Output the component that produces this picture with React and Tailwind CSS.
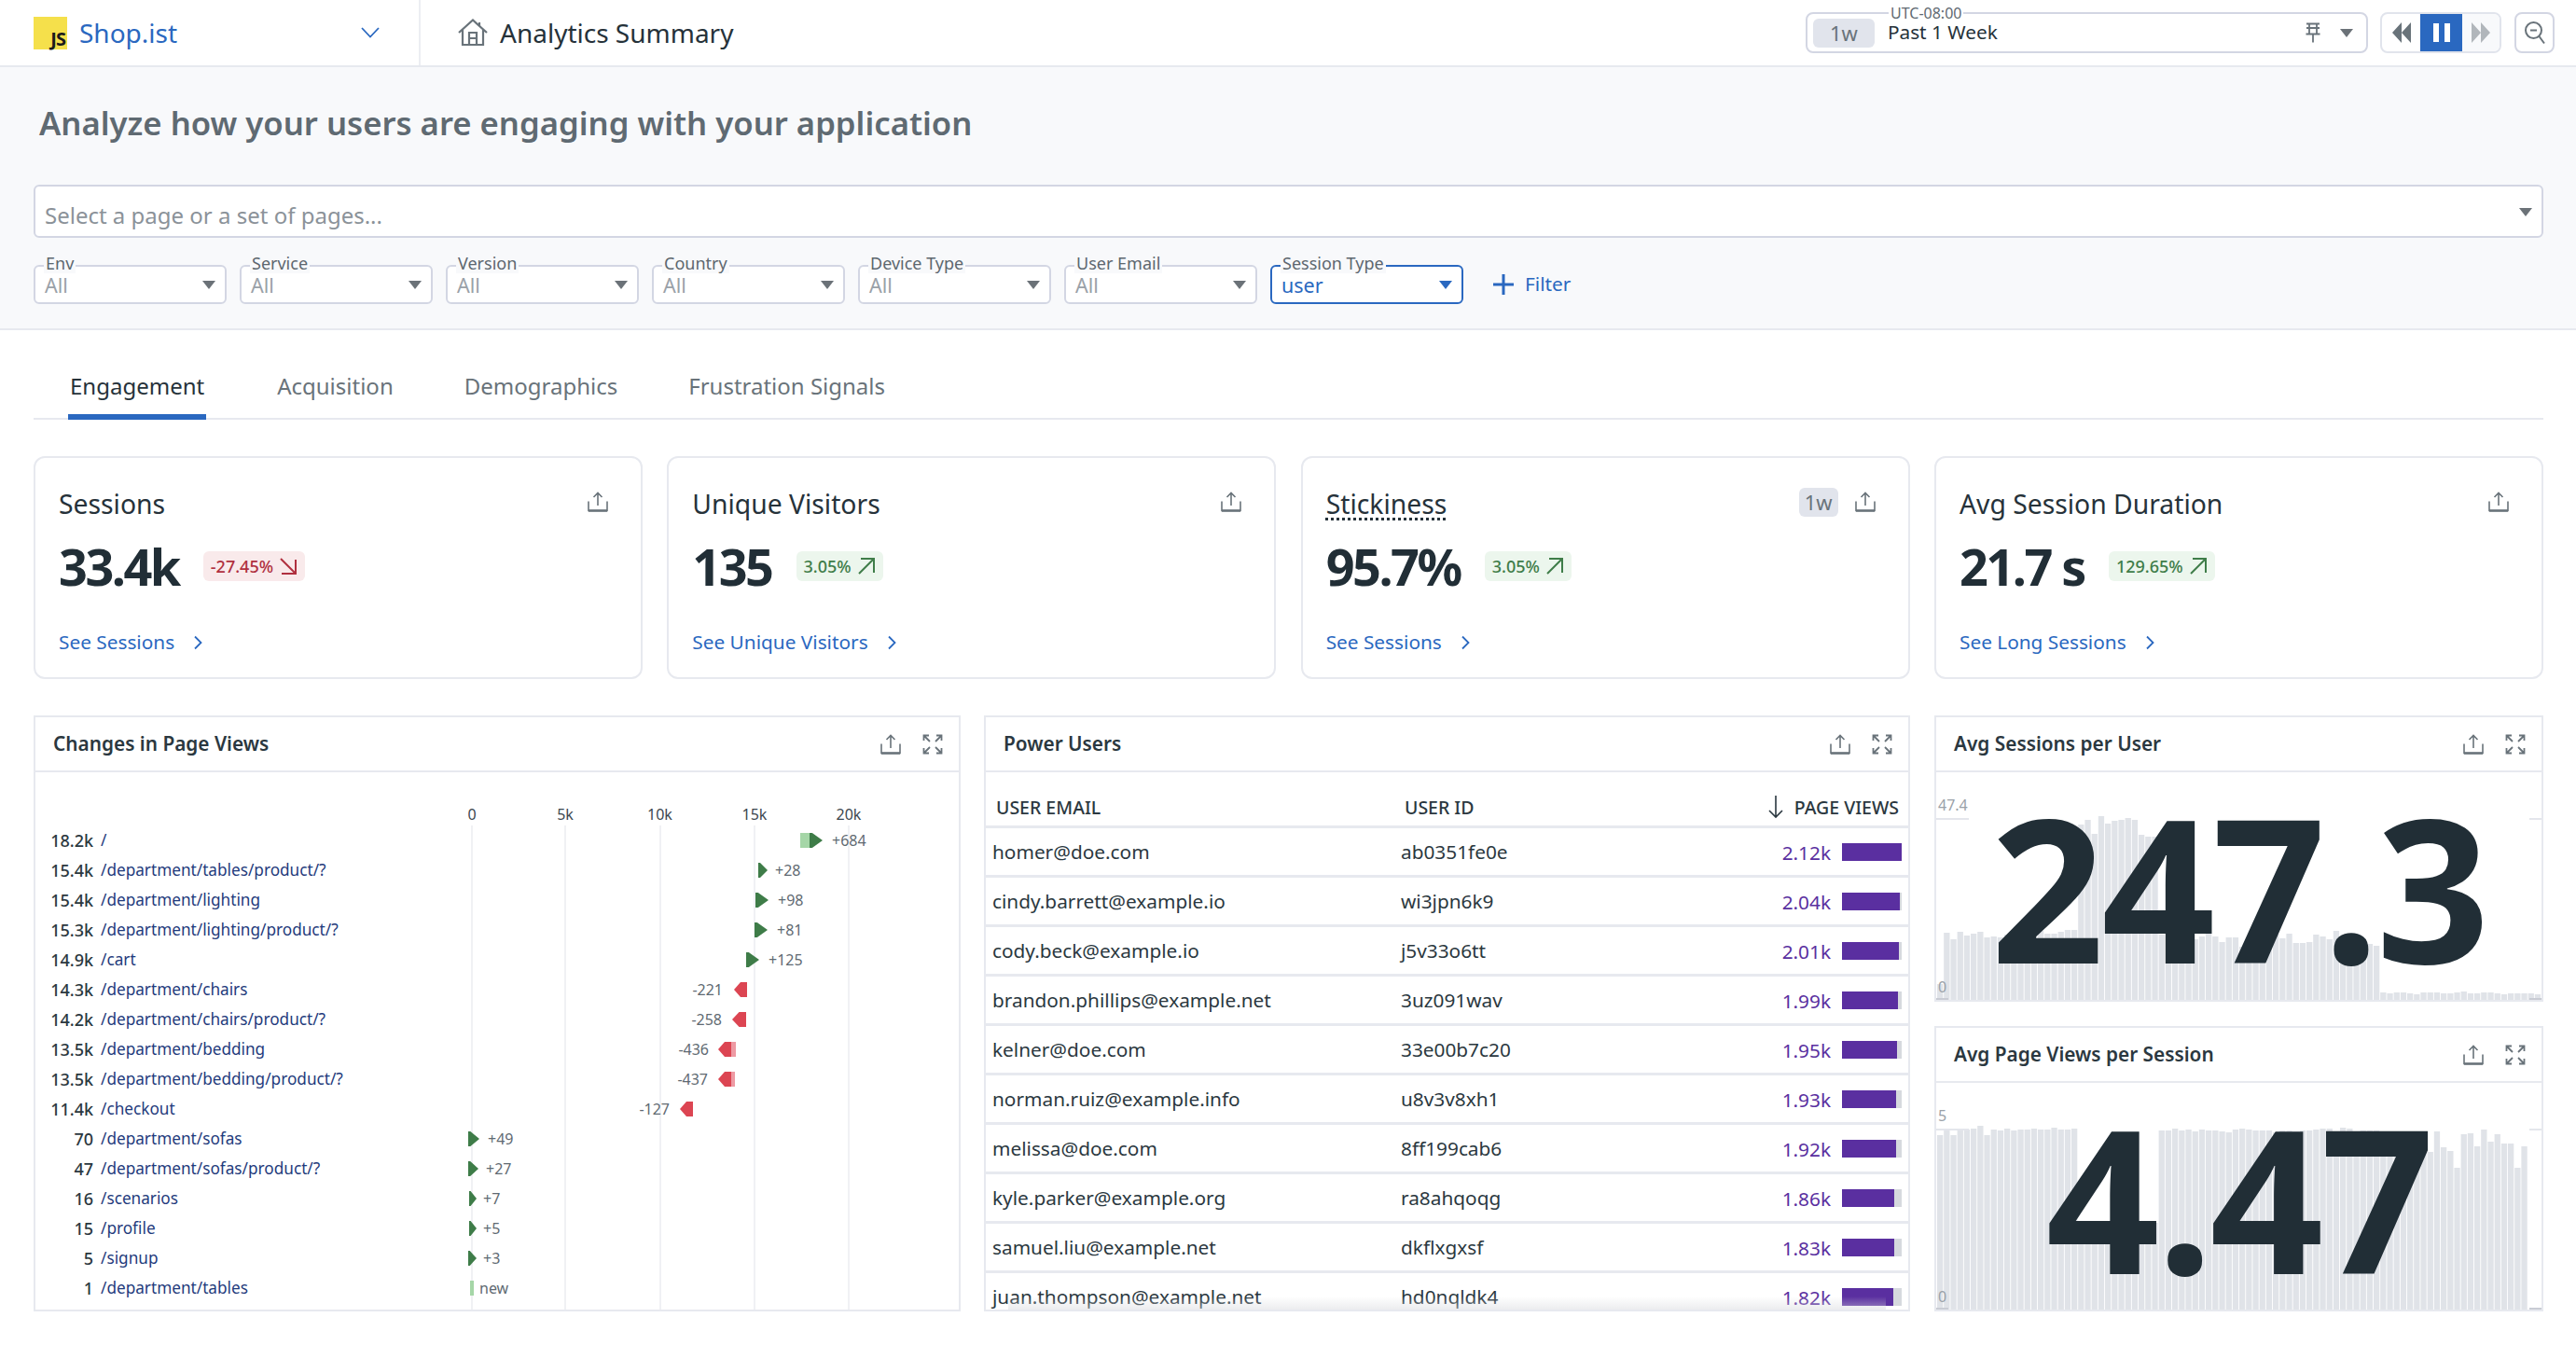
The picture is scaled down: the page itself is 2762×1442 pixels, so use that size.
const CARDS = [
  { title: "Sessions", value: "33.4k", delta: "-27.45%", down: true, link: "See Sessions" },
  { title: "Unique Visitors", value: "135", delta: "3.05%", link: "See Unique Visitors" },
  { title: "Stickiness", value: "95.7%", delta: "3.05%", link: "See Sessions", dotted: true, badge: "1w" },
  { title: "Avg Session Duration", value: "21.7 s", delta: "129.65%", link: "See Long Sessions" },
];

const FILTERS = ["Env", "Service", "Version", "Country", "Device Type", "User Email"];

// value, path, arrow start/end, light bar start/end, label, label position (all px from panel's left)
const PAGE_CHANGES = [
  ["18.2k", "/", 830, 844, 820, 830, "+684", 854],
  ["15.4k", "/department/tables/product/?", 775, 785, 0, 0, "+28", 793],
  ["15.4k", "/department/lighting", 772, 786, 0, 0, "+98", 796],
  ["15.3k", "/department/lighting/product/?", 771, 785, 0, 0, "+81", 795],
  ["14.9k", "/cart", 762, 776, 0, 0, "+125", 786],
  ["14.3k", "/department/chairs", 749, 763, 0, 0, "-221", 737],
  ["14.2k", "/department/chairs/product/?", 747, 762, 0, 0, "-258", 736],
  ["13.5k", "/department/bedding", 732, 746, 746, 751, "-436", 722],
  ["13.5k", "/department/bedding/product/?", 732, 746, 746, 750, "-437", 721],
  ["11.4k", "/checkout", 691, 705, 0, 0, "-127", 680],
  ["70", "/department/sofas", 464, 476, 0, 0, "+49", 485],
  ["47", "/department/sofas/product/?", 464, 475, 0, 0, "+27", 483],
  ["16", "/scenarios", 465, 473, 0, 0, "+7", 480],
  ["15", "/profile", 465, 473, 0, 0, "+5", 480],
  ["5", "/signup", 464, 473, 0, 0, "+3", 480],
  ["1", "/department/tables", 0, 0, 466, 469.5, "new", 476],
];

const AXIS = [["0", 468], ["5k", 568], ["10k", 669.5], ["15k", 771], ["20k", 872]];

const USERS = [
  ["homer@doe.com", "ab0351fe0e", "2.12k", 64],
  ["cindy.barrett@example.io", "wi3jpn6k9", "2.04k", 62],
  ["cody.beck@example.io", "j5v33o6tt", "2.01k", 61],
  ["brandon.phillips@example.net", "3uz091wav", "1.99k", 60],
  ["kelner@doe.com", "33e00b7c20", "1.95k", 59],
  ["norman.ruiz@example.info", "u8v3v8xh1", "1.93k", 58],
  ["melissa@doe.com", "8ff199cab6", "1.92k", 57.5],
  ["kyle.parker@example.org", "ra8ahqoqg", "1.86k", 56],
  ["samuel.liu@example.net", "dkflxgxsf", "1.83k", 55.5],
  ["juan.thompson@example.net", "hd0nqldk4", "1.82k", 55],
];

const SESSION_BARS = [
  17, 72, 65, 73, 69, 71, 73, 67, 68, 67, 70, 69, 68, 71, 72, 74, 71, 71, 73, 75, 75,
  188, 193, 178, 197, 189, 192, 193, 195, 193, 177, 175, 175,
  70, 68, 66, 69, 67, 65, 68, 71, 68, 62, 67, 67, 57, 62, 67, 66, 68, 70, 66, 71, 61, 61, 62, 70, 68, 65, 74, 67, 65, 65, 62, 60, 58,
  8, 7, 8, 8, 7, 6, 8, 8, 8, 7, 7, 8, 9, 7, 7, 8, 8, 7, 6, 7, 7, 7, 7, 6,
];

const PAGEVIEW_BARS = [
  187, 192, 187, 193, 193, 194, 197, 187, 193, 192, 194, 192, 193, 193, 194, 193, 193, 195, 193, 193, 194,
  93, 93, 93, 93, 93, 93, 93, 93, 93, 93, 93, 93,
  192, 192, 194, 192, 193, 191, 193, 192, 192, 191, 190, 193, 194, 193, 192, 192, 192, 190, 192, 192, 191, 192, 192, 193, 194, 194, 191, 195, 194, 191, 192, 192, 192, 191, 191, 191, 190, 191,
  164, 186, 169, 191, 174, 170, 152, 188, 189, 175, 193, 180, 188, 178, 178, 152, 175,
];

function ExportIcon() {
  return (
    <svg width="22" height="22" viewBox="0 0 22 22" fill="none" stroke="#69737a" strokeWidth="1.6">
      <path d="M11 15V1.500M6.500 6 11 1.500 15.500 6" />
      <path d="M1 10.500V20.500H21V10.500" />
      <path d="M1 20.500H21" strokeWidth="2.500" />
    </svg>
  );
}

function ExpandIcon() {
  return (
    <svg width="22" height="22" viewBox="0 0 22 22" fill="none" stroke="#69737a" strokeWidth="1.8">
      <path d="M1.500 7V1.500H7M1.500 1.500 8 8" />
      <path d="M20.500 7V1.500H15M20.500 1.500 14 8" />
      <path d="M1.500 15V20.500H7M1.500 20.500 8 14" />
      <path d="M20.500 15V20.500H15M20.500 20.500 14 14" />
    </svg>
  );
}

function Caret({ color = "#6b7278" }) {
  return (
    <svg width="14" height="10" viewBox="0 0 14 10">
      <polygon points="0,1 14,1 7,10" fill={color} />
    </svg>
  );
}

function DeltaArrow({ down }) {
  if (down) {
    return (
      <svg width="20" height="20" viewBox="0 0 20 20" fill="none" stroke="#b0303f" strokeWidth="2">
        <path d="M2 2 18 18M18 3V18H3" />
      </svg>
    );
  }
  return (
    <svg width="20" height="20" viewBox="0 0 20 20" fill="none" stroke="#3f7d49" strokeWidth="2">
      <path d="M2 18 18 2M4 2H18V17" />
    </svg>
  );
}

function Select({ label, value, active }) {
  return (
    <div className={`relative flex h-[42px] w-[207px] items-center justify-between rounded-md border-2 bg-white pl-[10px] pr-[10px] ${active ? "border-[#2a68c0]" : "border-[#d3d6e3]"}`}>
      <span className="absolute left-[9px] top-[-15px] bg-[#f8f9fb] px-[2px] text-[18px] leading-[22px] text-[#5d676f]">{label}</span>
      <span className={`pt-[2px] text-[21.500px] leading-none ${active ? "text-[#2a68c0]" : "text-[#9aa1a8]"}`}>{value}</span>
      <Caret color={active ? "#2a68c0" : "#6b7278"} />
    </div>
  );
}

function Card({ title, value, delta, down, link, dotted, badge }) {
  return (
    <div className="h-[239px] w-[653px] rounded-xl border-2 border-[#e7e9ef] bg-white pl-[25px] pr-[35px] pt-[29px]">
      <div className="flex h-[40px] items-center justify-between">
        <span className={`mb-[1px] text-[28.300px] leading-[40px] text-[#26323a] ${dotted ? "underline decoration-dotted decoration-[3px] underline-offset-[4px]" : ""}`}>{title}</span>
        <div className="mb-[4px] flex items-center gap-[18px]">
          {badge && <span className="rounded-md bg-[#e1e4ec] px-[6px] py-[4px] text-[22px] leading-[23px] text-[#69737a]">{badge}</span>}
          <ExportIcon />
        </div>
      </div>
      <div className="mt-[15px] flex h-[64px] items-center gap-[26px]">
        <span className="text-[54px] font-bold leading-[64px] tracking-[-2.500px] text-[#212e36]">{value}</span>
        <span className={`flex h-[32px] items-center gap-[6px] rounded-md px-[8px] text-[18px] font-medium ${down ? "bg-[#f9eaeb] text-[#b0303f]" : "bg-[#ecf6ed] text-[#3f7d49]"}`}>
          {delta}
          <DeltaArrow down={down} />
        </span>
      </div>
      <div className="mt-[35px] flex h-[30px] items-center gap-[21px] text-[20.800px] text-[#2a68c0]">
        {link}
        <svg width="9" height="16" viewBox="0 0 9 16" fill="none" stroke="#2a68c0" strokeWidth="1.800">
          <path d="M1 1.500 7.500 8 1 14.500" />
        </svg>
      </div>
    </div>
  );
}

function PanelHeader({ title }) {
  return (
    <div className="flex h-[59px] flex-none items-center justify-between border-b-2 border-[#e7e9ef] pl-[19px] pr-[17px]">
      <span className="text-[20.800px] font-semibold text-[#2b3840]">{title}</span>
      <div className="flex items-center gap-[23px]">
        <ExportIcon />
        <ExpandIcon />
      </div>
    </div>
  );
}

function ChangeMark({ row }) {
  const [, , from, to, lightFrom, lightTo, label] = row;
  const negative = label.startsWith("-");
  return (
    <>
      {lightTo > 0 && (
        <span
          className={`absolute top-0 h-[16px] ${negative ? "bg-[#ee9aa3]" : "bg-[#a5d6a7]"}`}
          style={{ left: lightFrom, width: lightTo - lightFrom }}
        />
      )}
      {to > 0 && (
        <svg className="absolute top-0" style={{ left: from, width: to - from }} height="16" viewBox="0 0 10 16" preserveAspectRatio="none">
          <polygon
            points={negative ? "10,0 5,0 0,8 5,16 10,16" : "0,0 2,0 10,8 2,16 0,16"}
            fill={negative ? "#dc4552" : "#3e7c48"}
          />
        </svg>
      )}
    </>
  );
}

function ChangesPanel() {
  return (
    <div className="flex h-[639px] w-[994px] flex-none flex-col border-2 border-[#e7e9ef] bg-white">
      <PanelHeader title="Changes in Page Views" />
      <div className="relative flex-1">
        {AXIS.map(([label, x]) => (
          <div key={label}>
            <span className="absolute top-[34px] -translate-x-1/2 text-[16px] leading-[22px] text-[#3c474f]" style={{ left: x }}>{label}</span>
            <span className="absolute bottom-0 top-[57px] w-[2px] bg-[#f0f1f4]" style={{ left: x - 1 }} />
          </div>
        ))}
        <div className="relative pt-[57px]">
          {PAGE_CHANGES.map((row) => (
            <div key={row[1]} className="relative flex h-[32px] items-center text-[18px]">
              <span className="w-[62px] flex-none text-right font-medium text-[#2b3840]">{row[0]}</span>
              <span className="ml-[8px] text-[17.200px] text-[#1f3b7c]">{row[1]}</span>
              <span className="absolute inset-x-0 top-[8px]">
                <ChangeMark row={row} />
              </span>
              <span className="absolute text-[16px] text-[#5f6a72]" style={{ left: row[7], transform: row[6].startsWith("-") ? "translateX(-100%)" : "none" }}>{row[6]}</span>
            </div>
          ))}
        </div>
      </div>
    </div>
  );
}

function UsersPanel() {
  return (
    <div className="relative ml-[25px] flex h-[639px] w-[993px] flex-none flex-col overflow-hidden border-2 border-[#e7e9ef] bg-white">
      <PanelHeader title="Power Users" />
      <div className="flex h-[60px] flex-none items-end justify-between border-b-[3px] border-[#e7e9ef] pb-[5px] pl-[11px] pr-[10px] text-[19.500px] font-medium text-[#2b3840]">
        <span className="w-[438px]">USER EMAIL</span>
        <span className="flex-1">USER ID</span>
        <span className="flex items-center gap-[10px]">
          <svg width="20" height="26" viewBox="0 0 20 26" fill="none" stroke="#2b3840" strokeWidth="1.600">
            <path d="M10 1V24M3 17l7 7 7-7" />
          </svg>
          PAGE VIEWS
        </span>
      </div>
      {USERS.map(([email, id, views, bar]) => (
        <div key={id} className="flex h-[53px] flex-none items-center border-b-[3px] border-[#e7e9ef] pl-[7px] pr-[7px] text-[20.800px] text-[#2b3840]">
          <span className="w-[438px] flex-none pt-[2px]">{email}</span>
          <span className="flex-1 pt-[2px]">{id}</span>
          <span className="pt-[3px] text-[#5a2fa0]">{views}</span>
          <span className="ml-[12px] h-[19px] w-[64px] bg-[#d6d9de]">
            <span className="block h-full bg-[#5a2fa0]" style={{ width: bar }} />
          </span>
        </div>
      ))}
      <div className="absolute inset-x-[24px] bottom-0 h-[14px] bg-gradient-to-b from-transparent to-[#d8dade]/50" />
    </div>
  );
}

function QueryValuePanel({ title, value, bars, top, height }) {
  return (
    <div className="flex flex-none flex-col border-2 border-[#e7e9ef] bg-white" style={{ height }}>
      <PanelHeader title={title} />
      <div className="relative flex-1 overflow-hidden">
        <svg className="absolute bottom-0 left-0" width="650" height="200" viewBox="0 0 650 200">
          {bars.map((h, i) => (
            <rect key={i} x={i * 7.2 + 1} y={200 - h} width="6.300" height={h} fill="#e0e3e8" />
          ))}
        </svg>
        <span className="absolute left-[2px] top-[24px] text-[16px] leading-[22px] text-[#9aa1a8]">{top}</span>
        <span className="absolute left-[2px] bottom-[3px] text-[16px] leading-[22px] text-[#9aa1a8]">0</span>
        <span className="absolute left-0 top-[49px] h-[2px] w-[35px] bg-[#e4e6ec]" />
        <span className="absolute right-0 top-[49px] h-[2px] w-[13px] bg-[#e4e6ec]" />
        <span className="absolute bottom-0 left-0 h-[2px] w-[13px] bg-[#c9ccd4]" />
        <span className="absolute bottom-0 right-0 h-[2px] w-[13px] bg-[#c9ccd4]" />
        <div className="absolute inset-0 flex items-center justify-center">
          <span className="text-[213px] font-bold leading-[170px] tracking-[-3px] text-[#212e36]">{value}</span>
        </div>
      </div>
    </div>
  );
}

export default function App() {
  return (
    <div className="min-h-screen bg-white font-['Noto_Sans',sans-serif]">
      {/* Top bar */}
      <div className="flex h-[72px] items-center border-b-2 border-[#e7e9ef] pr-[23px]">
        <div className="flex h-full w-[451px] flex-none items-center border-r-2 border-[#eceef2] pl-[36px] pr-[42px]">
          <span className="flex h-[35px] w-[36px] items-end justify-end bg-[#f5e04b] pr-[2px] text-[20px] font-bold leading-[22px] tracking-[-1px] text-[#1b1b1b]">JS</span>
          <span className="ml-[13px] text-[28px] text-[#2a68c0]">Shop.ist</span>
          <svg className="ml-auto" width="20" height="12" viewBox="0 0 20 12" fill="none" stroke="#2a68c0" strokeWidth="1.800">
            <path d="M1 1 10 10.500 19 1" />
          </svg>
        </div>
        <svg className="ml-[40px]" width="32" height="30" viewBox="0 0 32 30" fill="none" stroke="#69737a" strokeWidth="2.200">
          <path d="M1 15 16 1.500 31 15" />
          <path d="M5 12V28H27V12" />
          <path d="M12 28V15H20V28M12 21H20" />
          <path d="M23 4V8" />
        </svg>
        <span className="ml-[13px] text-[28px] text-[#26323a]">Analytics Summary</span>

        <div className="relative ml-auto flex h-[44px] w-[603px] items-center rounded-lg border-2 border-[#d3d6e3] pl-[6px] pr-[14px]">
          <span className="absolute left-[87px] top-[-11px] bg-white px-[2px] text-[16px] leading-[20px] text-[#5f6a72]">UTC-08:00</span>
          <span className="rounded-md bg-[#e1e4ec] px-[18px] py-[2px] text-[22px] leading-[27px] text-[#69737a]">1w</span>
          <span className="ml-[14px] text-[20.800px] text-[#26323a]">Past 1 Week</span>
          <svg className="ml-auto mr-[20px]" width="18" height="22" viewBox="0 0 18 22" fill="none" stroke="#69737a" strokeWidth="1.800">
            <path d="M2 1.500H16M5 1.500V12M13 1.500V12M1.500 12.500H16.500M2 6H16M9 13V21.500" />
          </svg>
          <Caret />
        </div>
        <div className="ml-[13px] flex h-[44px] w-[130px] overflow-hidden rounded-lg border-2 border-[#e1e4ec]">
          <span className="flex w-[41px] items-center justify-center">
            <svg width="22" height="24" viewBox="0 0 22 24"><path d="M11 1V23L1 12ZM21 1V23L11 12Z" fill="#69737a" /></svg>
          </span>
          <span className="flex w-[45px] items-center justify-center gap-[6px] bg-[#2a68c0]">
            <span className="h-[20px] w-[6px] bg-white" />
            <span className="h-[20px] w-[6px] bg-white" />
          </span>
          <span className="flex flex-1 items-center justify-center bg-[#f8f9fb]">
            <svg width="22" height="24" viewBox="0 0 22 24"><path d="M1 1V23L11 12ZM11 1V23L21 12Z" fill="#b1b6bb" /></svg>
          </span>
        </div>
        <span className="ml-[14px] flex h-[44px] w-[43px] items-center justify-center rounded-lg border-2 border-[#d3d6e3]">
          <svg width="24" height="26" viewBox="0 0 24 26" fill="none" stroke="#69737a" strokeWidth="2">
            <circle cx="10.500" cy="10.500" r="8.500" />
            <path d="M16.500 17 22 24.500M7 10.500H14" />
          </svg>
        </span>
      </div>

      {/* Page filters */}
      <div className="border-b-2 border-[#e7e9ef] bg-[#f8f9fb] pb-[26px] pl-[36px] pr-[35px] pt-[35px]">
        <h1 className="pl-[6px] text-[34.700px] font-semibold leading-[50px] text-[#5f6a72]">Analyze how your users are engaging with your application</h1>
        <div className="mt-[41px] flex h-[57px] items-center justify-between rounded-md border-2 border-[#d3d6e3] bg-white pl-[10px] pr-[10px]">
          <span className="pt-[9px] text-[24px] text-[#8b9299]">Select a page or a set of pages...</span>
          <Caret />
        </div>
        <div className="mt-[29px] flex items-center gap-[14px]">
          {FILTERS.map((label) => (
            <Select key={label} label={label} value="All" />
          ))}
          <Select label="Session Type" value="user" active />
          <span className="ml-[18px] flex items-center gap-[12px] text-[20.800px] text-[#2a68c0]">
            <svg width="22" height="22" viewBox="0 0 22 22" fill="none" stroke="#2a68c0" strokeWidth="3">
              <path d="M11 0V22M0 11H22" />
            </svg>
            Filter
          </span>
        </div>
      </div>

      <div className="pl-[36px] pr-[35px]">
        {/* Tabs */}
        <div className="flex h-[96px] items-end gap-[76px] border-b-2 border-[#e7e9ef] pl-[39px] text-[24px] text-[#69737a]">
          <span className="-mb-[2px] -ml-[2px] border-b-[6px] border-[#2a68c0] px-[2px] pb-[12px] text-[#26323a]">Engagement</span>
          <span className="pb-[16px]">Acquisition</span>
          <span className="pb-[16px]">Demographics</span>
          <span className="pb-[16px]">Frustration Signals</span>
        </div>

        {/* Summary cards */}
        <div className="mt-[39px] flex justify-between">
          {CARDS.map((card) => (
            <Card key={card.title} {...card} />
          ))}
        </div>

        {/* Widgets */}
        <div className="mt-[39px] flex">
          <ChangesPanel />
          <UsersPanel />
          <div className="ml-auto flex w-[653px] flex-none flex-col gap-[26px]">
            <QueryValuePanel title="Avg Sessions per User" value="247.3" bars={SESSION_BARS} top="47.4" height={307} />
            <QueryValuePanel title="Avg Page Views per Session" value="4.47" bars={PAGEVIEW_BARS} top="5" height={306} />
          </div>
        </div>
      </div>
    </div>
  );
}
